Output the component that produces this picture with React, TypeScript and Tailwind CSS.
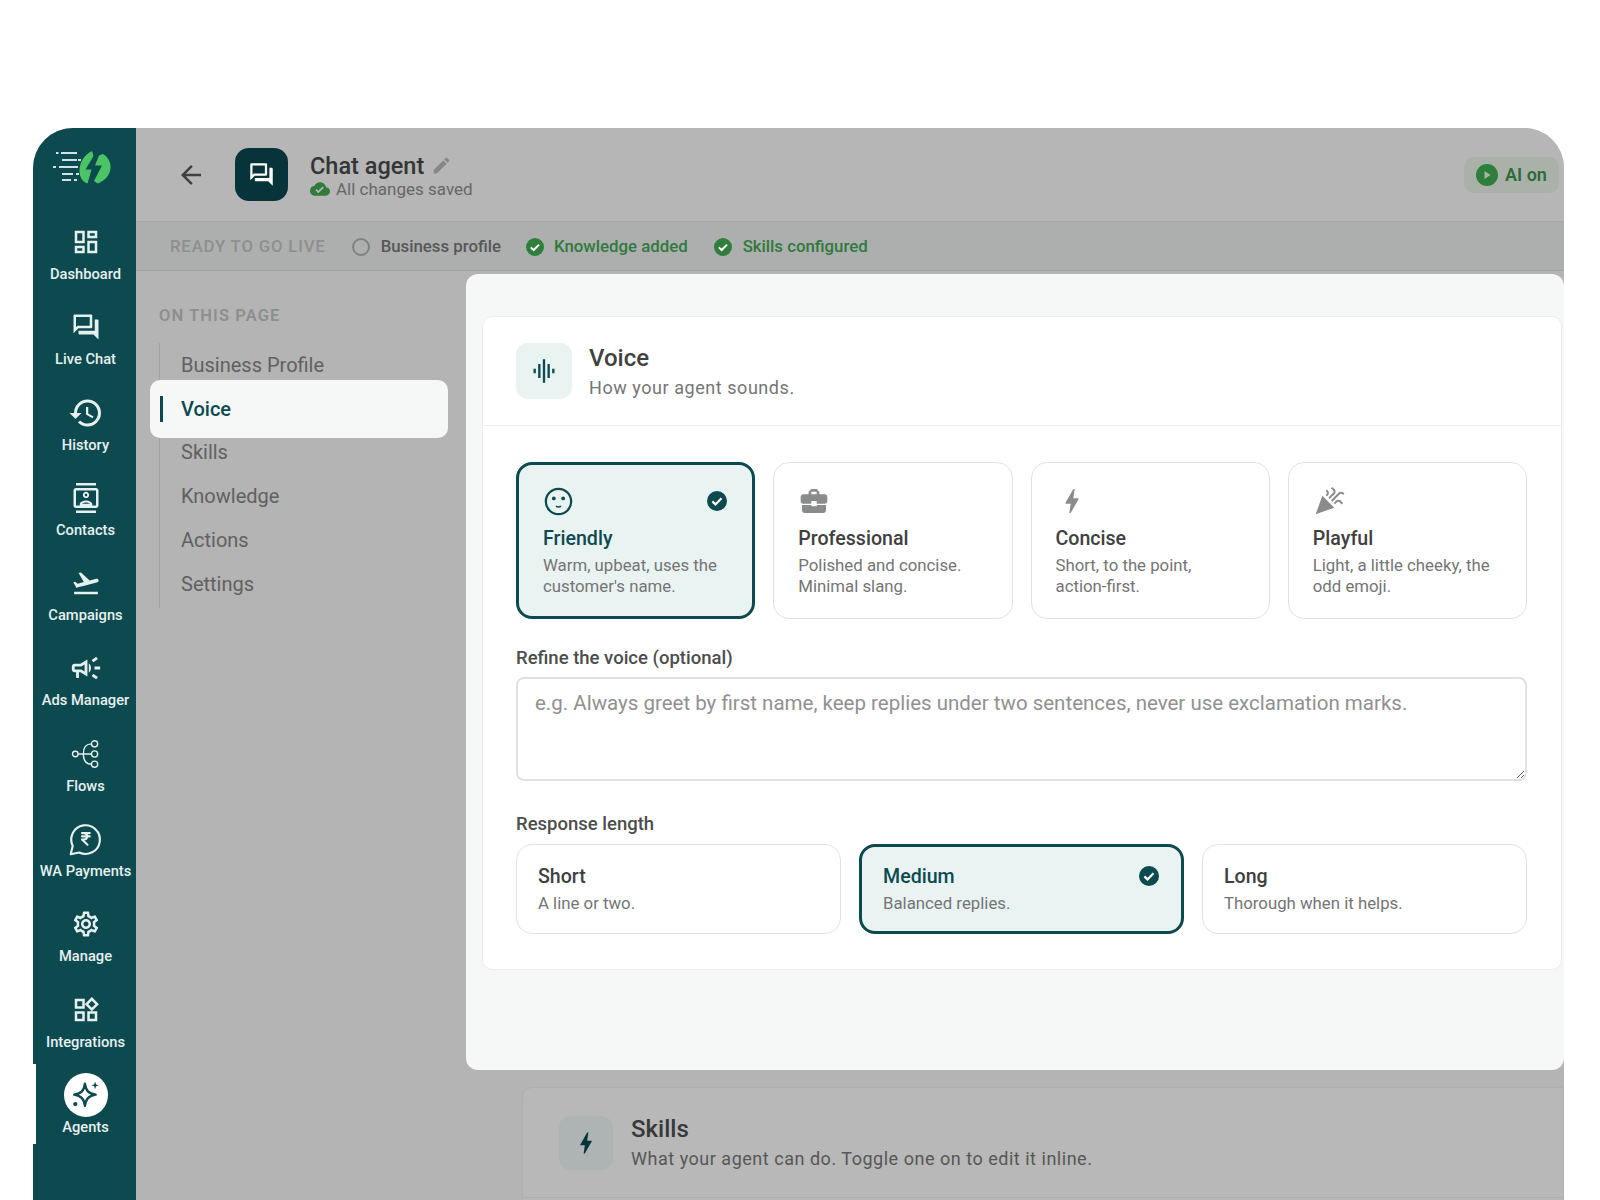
import React from "react";

const P = ({ d, className }: { d: string; className?: string }) => (
  <svg viewBox="0 0 24 24" fill="currentColor" className={className}>
    <path d={d} />
  </svg>
);

const ICONS = {
  dashboard: "M19 5v2h-4V5h4M9 5v6H5V5h4m10 8v6h-4v-6h4M9 17v2H5v-2h4M21 3h-8v6h8V3zM11 3H3v10h8V3zm10 8h-8v10h8V11zm-10 4H3v6h8v-6z",
  forum: "M15 4v7H5.17L4 12.17V4h11m1-2H3c-.55 0-1 .45-1 1v14l4-4h10c.55 0 1-.45 1-1V3c0-.55-.45-1-1-1zm5 4h-2v9H6v2c0 .55.45 1 1 1h11l4 4V7c0-.55-.45-1-1-1z",
  history: "M13 3a9 9 0 0 0-9 9H1l3.89 3.89.07.14L9 12H6c0-3.87 3.13-7 7-7s7 3.13 7 7-3.13 7-7 7c-1.93 0-3.68-.79-4.94-2.06l-1.42 1.42A8.954 8.954 0 0 0 13 21a9 9 0 0 0 0-18zm-1 5v5l4.28 2.54.72-1.21-3.5-2.08V8H12z",
  contacts: "M20 0H4v2h16V0zM4 24h16v-2H4v2zM20 4H4c-1.1 0-2 .9-2 2v12c0 1.1.9 2 2 2h16c1.1 0 2-.9 2-2V6c0-1.1-.9-2-2-2zm0 14H4V6h16v12zm-8-6c1.38 0 2.5-1.12 2.5-2.5S13.38 7 12 7 9.5 8.12 9.5 9.5 10.62 12 12 12zm0-3.5c.55 0 1 .45 1 1s-.45 1-1 1-1-.45-1-1 .45-1 1-1zM17 16.99c0-2.08-3.31-2.99-5-2.99s-5 .91-5 2.99V18h10v-1.01zM8.81 16.5c.61-.52 2.03-1 3.19-1 1.17 0 2.59.48 3.2 1H8.81z",
  takeoff: "M2.5 19h19v2h-19v-2zm19.57-9.36c-.21-.8-1.04-1.28-1.84-1.06L14.92 10l-6.9-6.43-1.93.51 4.14 7.17-4.97 1.33-1.97-1.54-1.45.39 2.59 4.49s7.12-1.9 16.57-4.43c.81-.23 1.28-1.05 1.07-1.85z",
  campaign: "M18 11v2h4v-2h-4zm-2 6.61c.96.71 2.21 1.65 3.2 2.39.4-.53.8-1.07 1.2-1.6-.99-.74-2.24-1.68-3.2-2.4-.4.54-.8 1.08-1.2 1.61zM20.4 5.6c-.4-.53-.8-1.07-1.2-1.6-.99.74-2.24 1.68-3.2 2.4.4.53.8 1.07 1.2 1.6.96-.72 2.21-1.65 3.2-2.4zM4 9c-1.1 0-2 .9-2 2v2c0 1.1.9 2 2 2h1v4h2v-4h1l5 3V6L8 9H4zm5.03 1.71L11 9.53v4.94l-1.97-1.18-.48-.29H4v-2h4.55l.48-.29zM15.5 12c0-1.33-.58-2.53-1.5-3.35v6.69c.92-.81 1.5-2.01 1.5-3.34z",
  settings: "M19.43 12.98c.04-.32.07-.64.07-.98 0-.34-.03-.66-.07-.98l2.11-1.65c.19-.15.24-.42.12-.64l-2-3.46c-.09-.16-.26-.25-.44-.25-.06 0-.12.01-.17.03l-2.49 1c-.52-.4-1.08-.73-1.69-.98l-.38-2.65C14.46 2.18 14.25 2 14 2h-4c-.25 0-.46.18-.49.42l-.38 2.65c-.61.25-1.17.59-1.69.98l-2.49-1c-.06-.02-.12-.03-.18-.03-.17 0-.34.09-.43.25l-2 3.46c-.13.22-.07.49.12.64l2.11 1.65c-.04.32-.07.65-.07.98 0 .33.03.66.07.98l-2.11 1.65c-.19.15-.24.42-.12.64l2 3.46c.09.16.26.25.44.25.06 0 .12-.01.17-.03l2.49-1c.52.4 1.08.73 1.69.98l.38 2.65c.03.24.24.42.49.42h4c.25 0 .46-.18.49-.42l.38-2.65c.61-.25 1.17-.59 1.69-.98l2.49 1c.06.02.12.03.18.03.17 0 .34-.09.43-.25l2-3.46c.12-.22.07-.49-.12-.64l-2.11-1.65zm-1.98-1.71c.04.31.05.52.05.73 0 .21-.02.43-.05.73l-.14 1.13.89.7 1.08.84-.7 1.21-1.27-.51-1.04-.42-.9.68c-.43.32-.84.56-1.25.73l-1.06.43-.16 1.13-.2 1.35h-1.4l-.19-1.35-.16-1.13-1.06-.43c-.43-.18-.83-.41-1.23-.71l-.91-.7-1.06.43-1.27.51-.7-1.21 1.08-.84.89-.7-.14-1.13c-.03-.31-.05-.54-.05-.74s.02-.43.05-.73l.14-1.13-.89-.7-1.08-.84.7-1.21 1.27.51 1.04.42.9-.68c.43-.32.84-.56 1.25-.73l1.06-.43.16-1.13.2-1.35h1.39l.19 1.35.16 1.13 1.06.43c.43.18.83.41 1.23.71l.91.7 1.06-.43 1.27-.51.7 1.21-1.07.85-.89.7.14 1.13zM12 8c-2.21 0-4 1.79-4 4s1.79 4 4 4 4-1.79 4-4-1.79-4-4-4zm0 6c-1.1 0-2-.9-2-2s.9-2 2-2 2 .9 2 2-.9 2-2 2z",
  widgets: "M16.66 4.52l2.83 2.83-2.83 2.83-2.83-2.83 2.83-2.83M9 5v4H5V5h4m10 10v4h-4v-4h4M9 15v4H5v-4h4m7.66-13.31L11 7.34 16.66 13l5.66-5.66-5.66-5.65zM11 3H3v8h8V3zm10 10h-8v8h8v-8zm-10 0H3v8h8v-8z",
  equalizer: "M7 18h2V6H7v12zm4 4h2V2h-2v20zm-8-8h2v-4H3v4zm12 4h2V6h-2v12zm4-8v4h2v-4h-2z",
  briefcase: "M10 16v-1H3.01L3 19c0 1.11.89 2 2 2h14c1.11 0 2-.89 2-2v-4h-7v1h-4zm10-9h-4.01V5l-2-2h-4l-2 2v2H4c-1.1 0-2 .9-2 2v3c0 1.11.89 2 2 2h6v-2h4v2h6c1.1 0 2-.9 2-2V9c0-1.1-.9-2-2-2zm-6 0h-4V5h4v2z",
  bolt: "M11 21h-1l1-7H7.5c-.58 0-.57-.32-.38-.66.19-.34.05-.08.07-.12C8.48 10.94 10.42 7.54 13 3h1l-1 7h3.5c.49 0 .56.33.47.51l-.07.15C12.96 17.55 11 21 11 21z",
  party: "M2 22l14-5-9-9zm12.53-9.47l5.59-5.59c.49-.49 1.28-.49 1.77 0l.59.59 1.06-1.06-.59-.59c-1.07-1.07-2.82-1.07-3.89 0l-5.59 5.59 1.06 1.06zm-4.47-5.65l-.59.59 1.06 1.06.59-.59c1.07-1.07 1.07-2.82 0-3.89l-.59-.59-1.06 1.07.59.59c.48.48.48 1.28 0 1.76zm7 5l-1.59 1.59 1.06 1.06 1.59-1.59c.49-.49 1.28-.49 1.77 0l1.61 1.61 1.06-1.06-1.61-1.61c-1.08-1.07-2.82-1.07-3.89 0zm-2-6l-3.59 3.59 1.06 1.06 3.59-3.59c1.07-1.07 1.07-2.82 0-3.89l-1.59-1.59-1.06 1.06 1.59 1.59c.48.49.48 1.29 0 1.77z",
  cloud: "M19.35 10.04C18.67 6.59 15.64 4 12 4 9.11 4 6.6 5.64 5.35 8.04 2.34 8.36 0 10.91 0 14c0 3.31 2.69 6 6 6h13c2.76 0 5-2.24 5-5 0-2.64-2.05-4.78-4.65-4.96zM10 17l-3.5-3.5 1.41-1.41L10 14.17 15.18 9l1.41 1.41L10 17z",
  pencil: "M3 17.25V21h3.75L17.81 9.94l-3.75-3.75L3 17.25zM20.71 7.04c.39-.39.39-1.02 0-1.41l-2.34-2.34c-.39-.39-1.02-.39-1.41 0l-1.83 1.83 3.75 3.75 1.83-1.83z",
  back: "M20 11H7.83l5.59-5.59L12 4l-8 8 8 8 1.41-1.41L7.83 13H20v-2z",
};

const FlowsIcon = () => (
  <svg viewBox="0 0 28 28" fill="none" stroke="currentColor" strokeWidth="1.3" className="w-[30px] h-[30px]">
    <circle cx="4" cy="14" r="2.6" />
    <circle cx="22" cy="4.5" r="2.9" />
    <circle cx="22" cy="14" r="2.9" />
    <circle cx="22" cy="23.5" r="2.9" />
    <path d="M6.6 14H19M11.5 14c0-6 2-9.5 7.7-9.5M11.5 14c0 6 2 9.5 7.7 9.5" />
  </svg>
);

const RupeeChatIcon = () => (
  <svg viewBox="0 0 24 24" fill="none" stroke="currentColor" strokeLinecap="round" strokeLinejoin="round" className="w-[37px] h-[37px]">
    <path strokeWidth="1.4" d="M7.9 20.4A9.3 9.3 0 1 0 3.7 16.2L2.4 21.6Z" />
    <g transform="translate(7.2 6.6) scale(0.42)" strokeWidth="3.2">
      <path d="M6 3h12M6 8h12M6 13l8.5 8M6 13h3M9 13c6.667 0 6.667-10 0-10" />
    </g>
  </svg>
);

const SparkleIcon = () => (
  <svg viewBox="0 0 28 28" fill="none" className="w-[30px] h-[30px] text-[#0d4a4f]">
    <path d="M13 3.500c1 6.500 3.200 9 10 10.200-6.800 1.200-9 3.800-10 10.300-1-6.500-3.200-9.100-10-10.300 6.800-1.200 9-3.700 10-10.200z" stroke="currentColor" strokeWidth="2.200" strokeLinejoin="round" />
    <path d="M22.500 1.500l.9 2.600 2.600.9-2.600.9-.9 2.600-.9-2.600-2.600-.9 2.600-.9z" fill="currentColor" />
    <circle cx="4" cy="22.500" r="2" fill="currentColor" />
  </svg>
);

const Verified = ({ className }: { className: string }) => (
  <svg viewBox="0 0 20 20" className={className}>
    <circle cx="10" cy="10" r="10" fill="currentColor" />
    <path d="M5.400 10.400l3.100 3 6-6.100" fill="none" stroke="white" strokeWidth="2.200" />
  </svg>
);

const Logo = () => (
  <svg viewBox="0 0 60 34" className="w-[60px] h-[34px]">
    <g fill="#cfe3e2">
      <rect x="3" y="1" width="2.500" height="2" />
      <rect x="8" y="1" width="16" height="2" />
      <rect x="9" y="8" width="15" height="2" />
      <rect x="25" y="8" width="3" height="2" />
      <rect x="0" y="15" width="3" height="2" />
      <rect x="6" y="15" width="19" height="2" />
      <rect x="9" y="22" width="11" height="2" />
      <rect x="23" y="22" width="3" height="2" />
      <rect x="9" y="28" width="9" height="2" />
      <rect x="21" y="28" width="3" height="2" />
    </g>
    <g fill="#4cc364">
      <path d="M39 0l1.500 5-8 13.500h6l-4 14c-5-1.500-8-6-8-13 0-8 5-16 12.500-19.500z" />
      <path d="M50 3c5 3 8 8 7.500 14-.5 7.500-6 13-13 15.500L41 30l8-15.500h-7L46 4.500z" />
    </g>
  </svg>
);

const navItems = [
  { label: "Dashboard", icon: <P d={ICONS.dashboard} className="w-[30px] h-[30px]" /> },
  { label: "Live Chat", icon: <P d={ICONS.forum} className="w-[30px] h-[30px]" /> },
  { label: "History", icon: <P d={ICONS.history} className="w-[36px] h-[36px]" /> },
  { label: "Contacts", icon: <P d={ICONS.contacts} className="w-[30px] h-[30px]" /> },
  { label: "Campaigns", icon: <P d={ICONS.takeoff} className="w-[30px] h-[30px]" /> },
  { label: "Ads Manager", icon: <P d={ICONS.campaign} className="w-[34px] h-[34px]" /> },
  { label: "Flows", icon: <FlowsIcon /> },
  { label: "WA Payments", icon: <RupeeChatIcon /> },
  { label: "Manage", icon: <P d={ICONS.settings} className="w-[30px] h-[30px]" /> },
  { label: "Integrations", icon: <P d={ICONS.widgets} className="w-[30px] h-[30px]" /> },
];

const voices = [
  {
    title: "Friendly",
    desc: ["Warm, upbeat, uses the", "customer's name."],
    selected: true,
    icon: (
      <svg viewBox="0 0 28 28" fill="none" stroke="currentColor" className="ml-[1px] w-[29px] h-[29px] text-[#0d4a4f]">
        <circle cx="14" cy="14" r="12.200" strokeWidth="2.200" />
        <circle cx="9.500" cy="11" r="1.800" fill="currentColor" stroke="none" />
        <circle cx="18.500" cy="11" r="1.800" fill="currentColor" stroke="none" />
        <path d="M11.500 18.500c1.500 1 3.500 1 5 0" strokeWidth="1.500" />
      </svg>
    ),
  },
  { title: "Professional", desc: ["Polished and concise.", "Minimal slang."], icon: <P d={ICONS.briefcase} className="w-[32px] h-[32px]" /> },
  { title: "Concise", desc: ["Short, to the point,", "action-first."], icon: <P d={ICONS.bolt} className="w-[32px] h-[32px]" /> },
  { title: "Playful", desc: ["Light, a little cheeky, the", "odd emoji."], icon: <P d={ICONS.party} className="w-[32px] h-[32px]" /> },
];

const lengths = [
  { title: "Short", desc: "A line or two." },
  { title: "Medium", desc: "Balanced replies.", selected: true },
  { title: "Long", desc: "Thorough when it helps." },
];

const pageLinks = ["Business Profile", "Voice", "Skills", "Knowledge", "Actions", "Settings"];

const Sidebar = () => (
  <aside className="w-[103px] shrink-0 bg-[#0d4a4f] text-[#e6f0ef] flex flex-col pl-[2px]">
    <div className="h-[84px] flex items-center justify-center pr-[5px] pb-[5px]">
      <Logo />
    </div>
    {navItems.map((item) => (
      <div key={item.label} className="h-[85.300px] flex flex-col items-center">
        <div className="mt-[15px] h-[30px] flex items-center justify-center">{item.icon}</div>
        <span className="mt-[8px] text-[14.700px] leading-[18px] font-medium whitespace-nowrap">{item.label}</span>
      </div>
    ))}
    <div className="relative h-[85.300px] flex flex-col items-center">
      <div className="absolute -left-[2px] top-[-1px] w-[3px] h-[80px] bg-white" />
      <div className="mt-[8px] w-[44px] h-[44px] rounded-full bg-white flex items-center justify-center">
        <SparkleIcon />
      </div>
      <span className="mt-[1px] text-[14.700px] leading-[18px] font-medium">Agents</span>
    </div>
  </aside>
);

const VoiceCard = ({ title, desc, icon, selected }: (typeof voices)[number]) => (
  <div
    className={
      selected
        ? "relative h-[157px] rounded-[16px] border-[3px] border-[#0d4a4f] bg-[#e9f3f2] pl-[24px] pt-[21px]"
        : "relative h-[157px] rounded-[16px] border border-[#e1e3e3] bg-white pl-[24px] pt-[23px] text-[#8a8b8b]"
    }
  >
    {selected && <Verified className="absolute right-[25px] top-[26px] w-[20px] h-[20px] text-[#0d4a4f]" />}
    <div className="h-[30px] flex items-center">{icon}</div>
    <div className={selected ? "mt-[10px] text-[19.600px] leading-[26px] font-medium text-[#0d4a4f]" : "mt-[10px] text-[19.600px] leading-[26px] font-medium text-[#3f4040]"}>{title}</div>
    <div className="mt-[3px] text-[16.800px] leading-[20.500px] text-[#747575]">
      {desc.map((line) => (
        <div key={line}>{line}</div>
      ))}
    </div>
  </div>
);

const LengthCard = ({ title, desc, selected }: (typeof lengths)[number]) => (
  <div
    className={
      selected
        ? "relative h-[90px] rounded-[16px] border-[3px] border-[#0d4a4f] bg-[#e9f3f2] pl-[21px] pt-[17px]"
        : "relative h-[90px] rounded-[16px] border border-[#e1e3e3] bg-white pl-[21px] pt-[19px]"
    }
  >
    {selected && <Verified className="absolute right-[22px] top-[19px] w-[20px] h-[20px] text-[#0d4a4f]" />}
    <div className={selected ? "text-[19.600px] leading-[26px] font-medium text-[#0d4a4f]" : "text-[19.600px] leading-[26px] font-medium text-[#3f4040]"}>{title}</div>
    <div className="mt-[2px] text-[16.800px] leading-[22px] text-[#747575]">{desc}</div>
  </div>
);

const VoiceDialog = () => (
  <div className="absolute left-[330px] top-[146px] right-0 h-[796px] rounded-[12px] bg-[#f6f7f7] pl-[16px] pr-[2px] pt-[42px]">
    <div className="rounded-[10px] border border-[#eceeee] bg-white">
      <div className="h-[109px] border-b border-[#eff0f0] flex items-center pl-[33px] pb-[1px]">
        <div className="w-[56px] h-[56px] rounded-[12px] bg-[#e9f3f2] text-[#0d4a4f] flex items-center justify-center">
          <P d={ICONS.equalizer} className="w-[28px] h-[28px]" />
        </div>
        <div className="ml-[17px] pt-[2px]">
          <div className="text-[24px] leading-[30px] font-medium text-[#404141]">Voice</div>
          <div className="mt-[3px] text-[18px] leading-[24px] tracking-[0.550px] text-[#747575]">How your agent sounds.</div>
        </div>
      </div>
      <div className="pl-[33px] pr-[34px] pt-[36px] pb-[35px]">
        <div className="grid grid-cols-4 gap-[18px]">
          {voices.map((v) => (
            <VoiceCard key={v.title} {...v} />
          ))}
        </div>
        <label className="block mt-[28px] mb-[8px] text-[18.500px] leading-[22px] font-medium text-[#4c4d4d]">Refine the voice (optional)</label>
        <textarea
          placeholder="e.g. Always greet by first name, keep replies under two sentences, never use exclamation marks."
          className="block w-full h-[104px] rounded-[8px] border-2 border-[#e0e2e2] bg-white pl-[17px] pr-[18px] py-[11px] text-[20.500px] leading-[26px] outline-none placeholder:text-[#8f9191]"
        />
        <label className="block mt-[32px] mb-[9px] text-[18.500px] leading-[22px] font-medium text-[#4c4d4d]">Response length</label>
        <div className="grid grid-cols-3 gap-[18px]">
          {lengths.map((l) => (
            <LengthCard key={l.title} {...l} />
          ))}
        </div>
      </div>
    </div>
  </div>
);

const App = () => {
  return (
    <div className="h-[1200px] bg-white pt-[128px] pl-[33px] pr-[36px] overflow-hidden [font-family:Roboto,sans-serif]">
      <div className="h-[1072px] flex rounded-t-[40px] overflow-hidden bg-[#b3b4b3]">
        <Sidebar />
        <main className="relative flex-1 flex flex-col min-w-0">
          <header className="h-[94px] shrink-0 bg-[#b5b6b5] border-b border-[#a7a8a8] flex items-center pl-[40px] pr-[5px]">
            <P d={ICONS.back} className="w-[30px] h-[30px] text-[#3f4040]" />
            <div className="ml-[29px] w-[53px] h-[53px] rounded-[14px] bg-[#06343a] text-white flex items-center justify-center">
              <P d={ICONS.forum} className="w-[27px] h-[27px]" />
            </div>
            <div className="ml-[22px] pt-[2px]">
              <div className="flex items-center">
                <span className="text-[23.500px] leading-[28px] font-medium text-[#343535]">Chat agent</span>
                <P d={ICONS.pencil} className="ml-[7px] w-[21px] h-[21px] text-[#868787]" />
              </div>
              <div className="flex items-center mt-[-2px]">
                <P d={ICONS.cloud} className="w-[20px] h-[20px] text-[#2f7a3c]" />
                <span className="ml-[6px] text-[17px] leading-[22px] text-[#666767]">All changes saved</span>
              </div>
            </div>
            <div className="ml-auto h-[36px] w-[95px] rounded-[10px] bg-[#a9b1a9] flex items-center pl-[12px] text-[#2d6b3a]">
              <svg viewBox="0 0 22 22" className="w-[22px] h-[22px]">
                <circle cx="11" cy="11" r="11" fill="#2f7f3c" />
                <path d="M8.500 7l6 4-6 4z" fill="#a9b4a9" />
              </svg>
              <span className="ml-[7px] text-[18px] font-semibold">AI on</span>
            </div>
          </header>

          <div className="h-[49px] shrink-0 bg-[#adaeae] border-b border-[#a3a4a4] flex items-center pl-[34px] pt-[2px] text-[16.800px] font-medium">
            <span className="text-[#8e8f8f] tracking-[0.800px]">READY TO GO LIVE</span>
            <span className="ml-[26px] w-[18px] h-[18px] rounded-full border-2 border-[#808181]" />
            <span className="ml-[11px] text-[#565757]">Business profile</span>
            <Verified className="ml-[25px] w-[18px] h-[18px] text-[#2f7f3c]" />
            <span className="ml-[10px] text-[#2f7a3c]">Knowledge added</span>
            <Verified className="ml-[26px] w-[18px] h-[18px] text-[#2f7f3c]" />
            <span className="ml-[11px] text-[#2f7a3c]">Skills configured</span>
          </div>

          <div className="flex-1 flex min-h-0">
            <nav className="w-[386px] shrink-0 pl-[23px] pt-[34px]">
              <div className="text-[16.500px] leading-[22px] font-semibold tracking-[1.100px] text-[#8d8e8e]">ON THIS PAGE</div>
              <div className="relative mt-[16px] border-l border-[#a2a3a3] h-[265px] pl-[21px] flex flex-col text-[20px] text-[#606161]">
                {pageLinks.map((link) => (
                  <div key={link} className="h-[43.800px] shrink-0 flex items-center">
                    {link === "Voice" ? <span className="relative z-10 font-medium text-[#0d4a4f]">{link}</span> : link}
                  </div>
                ))}
                <div className="absolute left-[-10px] top-[37px] w-[298px] h-[58px] rounded-[10px] bg-[#f6f7f7]" />
                <div className="absolute left-[0px] top-[53px] w-[3px] h-[26px] bg-[#0d4a4f]" />
              </div>
            </nav>
            <div className="flex-1 pt-[816px] min-w-0">
              <div className="h-[200px] bg-[#b7b8b7] border border-[#adaeae] rounded-tl-[10px]">
                <div className="h-[110px] border-b border-[#adaeae] flex items-center pl-[36px]">
                  <div className="w-[54px] h-[54px] rounded-[12px] bg-[#adb4b3] text-[#06343a] flex items-center justify-center">
                    <P d={ICONS.bolt} className="w-[28px] h-[28px]" />
                  </div>
                  <div className="ml-[18px] mt-[-1px]">
                    <div className="text-[24px] leading-[30px] font-medium text-[#383939]">Skills</div>
                    <div className="mt-[3px] text-[18px] leading-[24px] tracking-[0.520px] text-[#565757]">What your agent can do. Toggle one on to edit it inline.</div>
                  </div>
                </div>
              </div>
            </div>
          </div>

          <VoiceDialog />
        </main>
      </div>
    </div>
  );
};

export default App;
